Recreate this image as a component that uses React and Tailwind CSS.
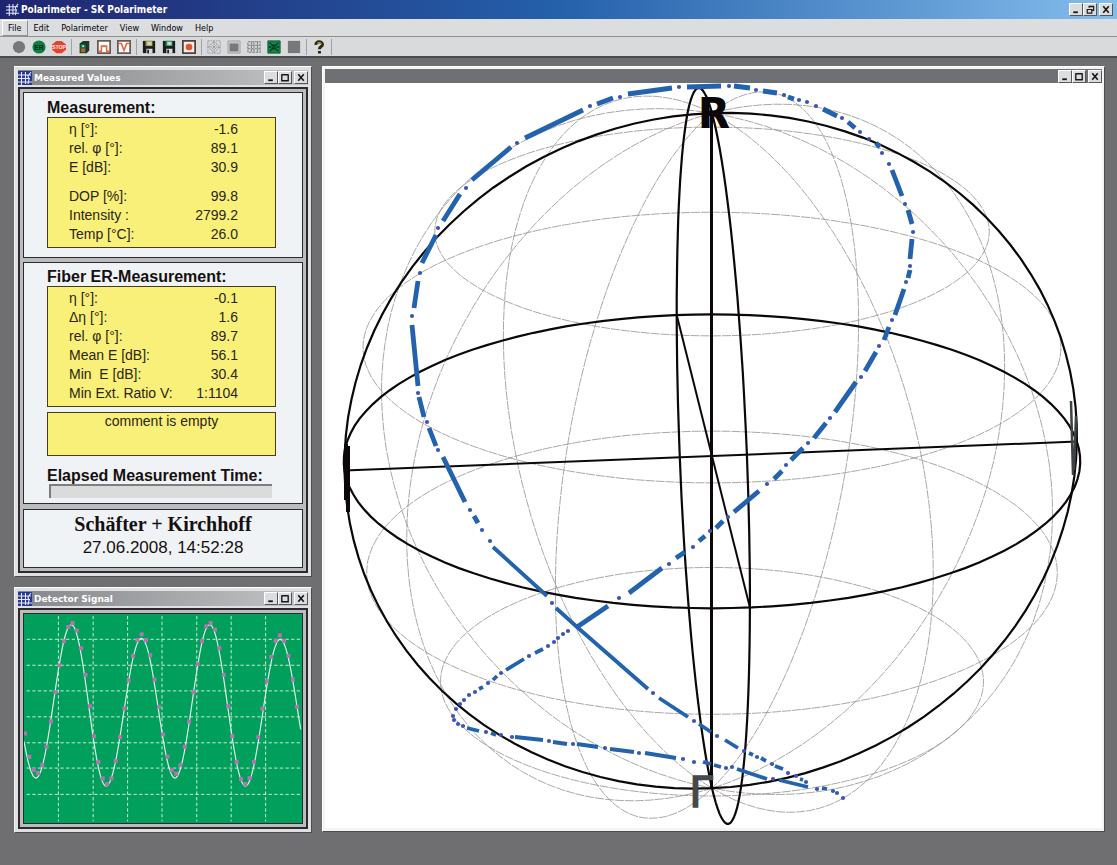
import React from 'react';

const MENU = ['File', 'Edit', 'Polarimeter', 'View', 'Window', 'Help'];

const MEASUREMENT = [
  [
    ['η [°]:', '-1.6'],
    ['rel. φ [°]:', '89.1'],
    ['E [dB]:', '30.9'],
  ],
  [
    ['DOP [%]:', '99.8'],
    ['Intensity :', '2799.2'],
    ['Temp [°C]:', '26.0'],
  ],
];

const FIBER = [
  [
    ['η [°]:', '-0.1'],
    ['Δη [°]:', '1.6'],
    ['rel. φ [°]:', '89.7'],
    ['Mean E [dB]:', '56.1'],
    ['Min  E [dB]:', '30.4'],
    ['Min Ext. Ratio V:', '1:1104'],
  ],
];

/* ---------- Poincaré sphere ---------- */

const R = 368;
const CX = 712;
const CY = 456;
const DIST = 9300;
const TILT = (23.5 * Math.PI) / 180;
const LON0 = 5.7;

const rad = (d) => (d * Math.PI) / 180;

// lon 0 faces the viewer, sinLat is the height on the vertical axis
function project(lon, sinLat, cosLat = Math.sqrt(Math.max(0, 1 - sinLat * sinLat))) {
  const x = R * cosLat * Math.sin(rad(lon));
  const f = R * cosLat * Math.cos(rad(lon));
  const h = R * sinLat;
  const y = -h * Math.cos(TILT) + f * Math.sin(TILT);
  const z = h * Math.sin(TILT) + f * Math.cos(TILT);
  const s = DIST / (DIST - z);
  return `${(CX + x * s).toFixed(1)} ${(CY + y * s).toFixed(1)}`;
}

const toPath = (pts) => 'M' + pts.join('L');
const STEPS = Array.from({ length: 121 }, (_, i) => i * 3);
const parallel = (sinLat) => toPath(STEPS.map((a) => project(a, sinLat)));
const meridian = (lon) => toPath(STEPS.map((a) => project(lon, Math.sin(rad(a)), Math.cos(rad(a)))));

const THIN = [
  ...[-2 / 3, -1 / 3, 1 / 3, 2 / 3].map(parallel),
  ...[30, 60, 120, 150].map((d) => meridian(LON0 + d)),
];
const BOLD = [parallel(0), meridian(LON0), meridian(LON0 + 90)];
const AXES = [0, 90].map((d) => toPath([project(LON0 + d, 0), project(LON0 + d + 180, 0)]));

const TRACE = [
  'M687 87L721 86M628 94L672 88M597 104L613 98M525 138L583 110M472 180L511 147M443 221L460 194M422 263L436 235M414 308L418 281',
  'M412 325L418 386M419 397L424 417M429 428L436 446M443 457L465 502M474 516L478 523',
  'M734 86L750 88M763 91L777 93M788 97L794 99M823 109L837 116M848 122L855 128M876 143L880 147M892 170L902 196M908 210L912 224M912 239L910 259M910 270L908 278M904 289L895 315',
  'M889 327L884 340M876 352L865 371M856 382L835 412M826 423L814 438M803 448L791 460M782 471L774 479M759 491L734 512M723 521L716 528M705 536L699 541M685 552L676 558M662 568L629 593M608 606L577 627',
].join('');

const TRACE_LOW = [
  'M493 547L547 596M556 608L577 627L648 689M659 698L688 717M699 724L711 732M725 740L738 748M749 753L753 755M761 758L766 761M775 766L783 769M800 779L803 780',
  'M543 649L535 653M524 659L506 670M497 676L493 680M483 687L479 689M467 728L479 731M491 733L496 735M515 737L543 740M553 742L567 744M577 744L598 747M610 749L634 752M645 753L676 758',
  'M703 762L711 764M714 765L721 767M737 769L767 779M779 780L808 787M822 788L827 789',
].join('');

const TRACE_DOTS = [
  [679, 87], [620, 97], [590, 106], [517, 143], [466, 188], [438, 228], [420, 273], [412, 316],
  [418, 393], [427, 422], [438, 450], [470, 510], [482, 530], [490, 541], [552, 603], [653, 693],
  [694, 721], [717, 736], [744, 751], [757, 757], [772, 764], [788, 773], [796, 776], [806, 782],
  [729, 86], [756, 90], [784, 95], [799, 100], [807, 102], [816, 106], [842, 118], [860, 132],
  [869, 139], [882, 153], [889, 164], [905, 204], [913, 232], [910, 266], [906, 282], [892, 320],
  [879, 346], [861, 377], [830, 418], [808, 443], [786, 465], [767, 484], [728, 517], [710, 531],
  [693, 547], [669, 564], [619, 598], [568, 631], [563, 634], [558, 638], [554, 642], [548, 646],
  [529, 656], [501, 673], [488, 683], [475, 692], [469, 695], [464, 700], [460, 704], [456, 709],
  [453, 716], [454, 720], [458, 724], [463, 726], [486, 732], [501, 735], [512, 737], [549, 741],
  [573, 744], [605, 748], [639, 753], [683, 759], [694, 762], [706, 762], [726, 768], [732, 767],
  [773, 779], [817, 789], [833, 791], [837, 793], [843, 798],
];

function Sphere() {
  return (
    <svg viewBox="325 83 777 745" className="block w-full" role="img" aria-label="Poincaré sphere">
      <g fill="none" stroke="#969191" strokeWidth="0.8" strokeDasharray="9 1">
        {THIN.map((d) => <path key={d} d={d} />)}
      </g>
      <g fill="none" stroke="#0c0809" strokeWidth="2.2">
        {BOLD.map((d) => <path key={d} d={d} />)}
      </g>
      <g fill="none" stroke="#0c0809" strokeWidth="2">
        {AXES.map((d) => <path key={d} d={d} />)}
      </g>
      <path d="M711.5 112V788" stroke="#0c0809" strokeWidth="3" />

      {/* edge-on axis labels */}
      <path d="M346 444V500M348 446V512" stroke="#0c0809" strokeWidth="4" />
      <path d="M1071 401L1073 475M1076 416L1074 470" stroke="#3d4244" strokeWidth="2.5" />
      <text x="714" y="128" textAnchor="middle" fontSize="42" fontWeight="bold" fill="#0c0809" fontFamily="'DejaVu Sans', sans-serif">R</text>
      <text x="701" y="807" textAnchor="middle" fontSize="42" fill="#45494c" stroke="#45494c" strokeWidth="1.5" fontFamily="'DejaVu Sans', sans-serif">Γ</text>

      <path d={TRACE} fill="none" stroke="#2363ae" strokeWidth="4.8" />
      <path d={TRACE_LOW} fill="none" stroke="#2363ae" strokeWidth="3.8" />
      {TRACE_DOTS.map(([x, y]) => <circle key={`${x}-${y}`} cx={x} cy={y} r="2.1" fill="#3a55b4" />)}
    </svg>
  );
}

/* ---------- Detector signal ---------- */

const EXTREMA = [[-27, 172], [78, 592], [185, 131], [290, 616], [397, 172], [498, 592], [603, 131], [711, 616], [816, 175], [920, 592]];

const SAMPLES = [
  458, 528, 568, 577, 553, 498, 422, 334, 253, 181, 138, 126, 149, 202, 282, 376, 466, 544, 593, 610, 593, 541,
  469, 383, 299, 225, 177, 160, 177, 223, 296, 378, 461, 528, 568, 579, 553, 498, 422, 334, 249, 180, 136, 126,
  146, 202, 282, 376, 466, 544, 595, 610, 592, 544, 469, 383, 301, 228, 180, 163, 180, 225, 295, 378,
];

function signalAt(x) {
  const i = EXTREMA.findIndex(([ex], n) => n > 0 && x <= ex);
  const [x0, y0] = EXTREMA[i - 1];
  const [x1, y1] = EXTREMA[i];
  const t = (1 - Math.cos((Math.PI * (x - x0)) / (x1 - x0))) / 2;
  return y0 + (y1 - y0) * t;
}

const SIGNAL = toPath(Array.from({ length: 210 }, (_, i) => 42 + i * 4).map((x) => `${x} ${signalAt(x).toFixed(1)}`));

function DetectorChart() {
  return (
    <svg viewBox="42 99 840 628" preserveAspectRatio="none" className="block h-[209px] w-full bg-[#00a05c]" role="img" aria-label="Detector signal">
      <g stroke="#cfe8d6" strokeWidth="3" strokeDasharray="10 7">
        {[146, 251, 355, 459, 564, 668, 772].map((x) => <path key={x} d={`M${x} 105V722`} />)}
        {[175, 253, 330, 408, 486, 562, 641].map((y) => <path key={y} d={`M50 ${y}H876`} />)}
      </g>
      <path d={SIGNAL} fill="none" stroke="#e3f5e8" strokeWidth="3.5" />
      {SAMPLES.map((y, i) => (
        <rect key={i} x={39 + i * 13.05} y={y - 6} width="12" height="12" fill="#b573b0" />
      ))}
    </svg>
  );
}

/* ---------- Window chrome ---------- */

const GLYPHS = {
  Minimize: <path d="M3 9H8" strokeWidth="2" />,
  Maximize: <path d="M2.5 3V9.500H9.500V3M2 3H10" strokeWidth="1.5" />,
  Restore: <path d="M5 4V3H10V7H8M3 6H8V10H3ZM4.500 2.500H10.500" strokeWidth="1.3" />,
  Close: <path d="M3 2.500L9 9.500M9 2.500L3 9.500" strokeWidth="1.800" />,
};

function Controls({ middle = 'Maximize' }) {
  return (
    <div className="flex shrink-0">
      {['Minimize', middle, 'Close'].map((name) => (
        <button
          key={name}
          type="button"
          aria-label={name}
          className={`h-[13px] w-[14px] border border-t-white border-l-white border-r-[#55565a] border-b-[#55565a] bg-[#dcdddf] ${name === 'Close' ? 'ml-0.5' : ''}`}
        >
          <svg viewBox="0 0 12 12" className="block h-[11px] w-[12px]" fill="none" stroke="#1b1718">{GLYPHS[name]}</svg>
        </button>
      ))}
    </div>
  );
}

function AppIcon({ size = 'size-[14px]', filled = true }) {
  return (
    <svg viewBox="0 0 14 14" className={`${size} shrink-0`} fill="none" stroke="#e3e9fa" strokeWidth="1.100">
      {filled && <rect width="14" height="14" fill="#27368f" stroke="none" />}
      <path d="M0 4H13M0 7.500H12M0 11H14M3.500 1V14M7.500 1V13M13 1L10 5L11 8L10 13" />
    </svg>
  );
}

function ToolWindow({ title, children }) {
  return (
    <section className="flex flex-col border border-t-white border-l-[#f1f1f2] border-r-[#4c4c50] border-b-[#4c4c50] bg-[#dfe0e2] p-[3px]">
      <header className="flex h-[15px] items-center bg-linear-to-r from-[#85878a] to-[#c3c4c6]">
        <AppIcon />
        <h2 className="ml-0.5 flex-1 font-['DejaVu_Sans',sans-serif] text-[9px] leading-[14px] font-bold text-white">{title}</h2>
        <Controls />
      </header>
      <div className="mt-0.5 flex flex-1 flex-col border-2 border-[#2f292b] bg-[#b9bdc0] p-[3px]">{children}</div>
    </section>
  );
}

/* ---------- Toolbar ---------- */

const Floppy = ({ color }) => (
  <>
    <path d="M1 1H15V15H1Z" fill="#1c1d1a" />
    <path d="M4 1H12V7H4Z" fill={color} />
    <path d="M6 2H11V6H6Z" fill="#cfd2cc" />
    <path d="M5 10H12V15H5Z" fill="#d9dadb" />
    <path d="M6 11H8V15H6Z" fill="#1c1d1a" />
  </>
);

const TOOLS = [
  [
    ['Idle', <circle cx="8" cy="8" r="7" fill="#77787a" />],
    ['ER measurement', <>
      <circle cx="8" cy="8" r="7.500" fill="#0b8044" />
      <text x="8" y="11" textAnchor="middle" fontSize="8" fontWeight="bold" fill="#062b17" fontFamily="'Liberation Sans', sans-serif">ER</text>
    </>],
    ['Stop', <>
      <path d="M5 1H11L16 5V11L11 15H5L0 11V5Z" fill="#e2442b" />
      <text x="8" y="10" textAnchor="middle" fontSize="6" fontWeight="bold" fill="#ffe9e2" fontFamily="'Liberation Sans', sans-serif">STOP</text>
    </>],
  ],
  [
    ['Device', <>
      <path d="M3 4L7 1H14V12L11 15H3Z" fill="#20362a" />
      <path d="M4 5H10V14H4Z" fill="#117845" />
      <path d="M5 10H9V14H5Z" fill="#e0522b" />
      <path d="M6 6H8V8H6Z" fill="#d5e5da" />
    </>],
    ['Square signal', <>
      <path d="M1 1H15V15H1Z" fill="#fff" stroke="#6a5a54" strokeWidth="2" />
      <path d="M2 13H5V7H11V13H14" fill="none" stroke="#e8663c" strokeWidth="1.800" />
    </>],
    ['Dip signal', <>
      <path d="M1 1H15V15H1Z" fill="#fff" stroke="#6a5a54" strokeWidth="2" />
      <path d="M2 4H5L8 12L11 4H14" fill="none" stroke="#e8663c" strokeWidth="1.800" />
    </>],
  ],
  [
    ['Save', <Floppy color="#a19a3c" />],
    ['Save as', <Floppy color="#129154" />],
    ['Record', <>
      <path d="M1 1H15V15H1Z" fill="#f3ece8" stroke="#4e403c" strokeWidth="2" />
      <circle cx="8" cy="8" r="3.800" fill="#e8502a" />
    </>],
  ],
  [
    ['Sphere', <path d="M1 1H15V15H1ZM8 1V15M1 8H15M8 3A5 5 0 1 0 8 13A5 5 0 1 0 8 3M5 5L11 11M11 5L5 11" fill="none" stroke="#8d8f91" strokeDasharray="2 1" />],
    ['Panel', <>
      <path d="M1 1H15V15H1Z" fill="#c3c5c7" stroke="#a3a5a7" />
      <path d="M3 4H13V13H3Z" fill="#77797b" />
    </>],
    ['Grid', <path d="M1 2H15V14H1ZM1 6H15M1 10H15M5 2V14M8 2V14M12 2V14" fill="none" stroke="#7a7c7f" strokeWidth="1.200" strokeDasharray="3 1" />],
    ['Adjust', <>
      <path d="M1 1H15V15H1Z" fill="#0b8b4b" stroke="#164a2e" />
      <path d="M3 3L6 6H10L13 3M3 13L6 10H10L13 13M2 8H5M11 8H14M6 8H10" fill="none" stroke="#08381f" strokeWidth="1.500" />
    </>],
    ['Blank', <path d="M1 1H15V15H1Z" fill="#77787b" />],
  ],
  [
    ['Help', <>
      <path d="M4.500 5.500C4 1 12 1 12 5C12 8 8.500 7 8.500 10.500M8.500 12.500V15.500" fill="none" stroke="#2c260f" strokeWidth="3.400" />
      <path d="M6 3.500C8 2 11 3 11 5" fill="none" stroke="#c9b23a" strokeWidth="1" />
    </>],
  ],
];

function Toolbar() {
  return (
    <div role="toolbar" className="flex h-[22px] items-center border-t border-[#8e9092] border-b-2 border-b-[#4a4d4f] bg-[#d9dadb] pl-[9px]">
      {TOOLS.map((group, i) => (
        <div key={i} className="flex items-center">
          {group.map(([name, art]) => (
            <button key={name} type="button" aria-label={name} className="flex h-4 w-5 items-center justify-center">
              <svg viewBox="0 0 16 16" className="size-[14px]">{art}</svg>
            </button>
          ))}
          <span className="mx-0.5 h-4 w-px bg-[#a0a2a4]" />
        </div>
      ))}
    </div>
  );
}

/* ---------- Panels ---------- */

function Values({ groups, label }) {
  return (
    <div className="mt-px w-[229px] border border-[#453d1e] bg-[#f9f07a] pt-0.5 pr-[37px] pb-[3px] pl-[21px]">
      <table aria-label={label} className="w-full border-collapse text-[14px] leading-[19px]">
        {groups.map((rows, g) => (
          <tbody key={g}>
            {g > 0 && <tr aria-hidden="true"><td className="h-[10px] p-0" /></tr>}
            {rows.map(([name, value]) => (
              <tr key={name}>
                <th scope="row" className="p-0 text-left font-normal whitespace-pre">{name}</th>
                <td className="p-0 text-right">{value}</td>
              </tr>
            ))}
          </tbody>
        ))}
      </table>
    </div>
  );
}

const PANEL = 'border border-[#2f292b] bg-[#f0f3f6]';
const HEADING = 'text-[16px] leading-4 font-bold text-[#15100f]';

export default function App() {
  return (
    <div className="flex min-h-screen flex-col bg-[#6f6f72] font-['Liberation_Sans',Arial,sans-serif] text-[#2b2513]">
      <header className="flex h-[19px] items-center bg-linear-to-r from-[#1f2470] via-[#2460ab] to-[#84bdec] pr-1 pl-1.5">
        <AppIcon size="size-[13px]" filled={false} />
        <h1 className="ml-0.5 flex-1 font-['DejaVu_Sans_Condensed','DejaVu_Sans',sans-serif] text-[10px] leading-4 font-bold text-white">
          Polarimeter - SK Polarimeter
        </h1>
        <Controls middle="Restore" />
      </header>

      <nav className="flex h-[17px] items-center bg-[#dcddde] pl-0.5 font-['DejaVu_Sans_Condensed','DejaVu_Sans',sans-serif] text-[9px] leading-[15px] text-black">
        {MENU.map((m, i) => (
          <button
            key={m}
            type="button"
            className={`border px-[5px] leading-[14px] ${i === 0 ? 'border-t-white border-l-white border-r-[#8e9092] border-b-[#8e9092]' : 'border-transparent'}`}
          >
            {m}
          </button>
        ))}
      </nav>
      <Toolbar />

      <main className="flex flex-1 items-start gap-[10px] pt-2 pr-3 pb-8 pl-[14px]">
        <div className="flex w-[298px] shrink-0 flex-col gap-[10px]">
          <ToolWindow title="Measured Values">
            <div className={`${PANEL} pt-[7px] pb-[9px] pl-[23px]`}>
              <h3 className={HEADING}>Measurement:</h3>
              <Values groups={MEASUREMENT} label="Measurement" />
            </div>
            <div className={`${PANEL} mt-1 pt-1.5 pb-[5px] pl-[23px]`}>
              <h3 className={HEADING}>Fiber ER-Measurement:</h3>
              <Values groups={FIBER} label="Fiber ER-Measurement" />
              <p className="mt-[5px] h-11 w-[229px] border border-[#453d1e] bg-[#f9f07a] text-center text-[14px] leading-4">comment is empty</p>
              <h3 id="elapsed" className={`${HEADING} mt-3`}>Elapsed Measurement Time:</h3>
              <div
                role="progressbar"
                aria-labelledby="elapsed"
                aria-valuenow={0}
                className="ml-0.5 h-[14px] w-[223px] border-t-2 border-l-2 border-[#7c7d7e] bg-[#dadbdb]"
              />
            </div>
            <div className={`${PANEL} mt-[5px] pt-1 pb-[9px] text-center text-[#15100f]`}>
              <p className="font-['Liberation_Serif',serif] text-[20px] leading-5 font-bold">Schäfter + Kirchhoff</p>
              <p className="mt-1 text-[17px] leading-5">27.06.2008, 14:52:28</p>
            </div>
          </ToolWindow>

          <ToolWindow title="Detector Signal">
            <div className="border border-[#2f292b]">
              <DetectorChart />
            </div>
          </ToolWindow>
        </div>

        <section className="min-w-0 flex-1 border border-t-white border-l-white border-r-[#4c4c50] border-b-[#4c4c50] bg-[#f4f4f5] p-0.5 pb-[3px]">
          <header className="flex h-[14px] items-center justify-end bg-[#6f7073]">
            <Controls />
          </header>
          <div className="bg-white">
            <Sphere />
          </div>
        </section>
      </main>
    </div>
  );
}
